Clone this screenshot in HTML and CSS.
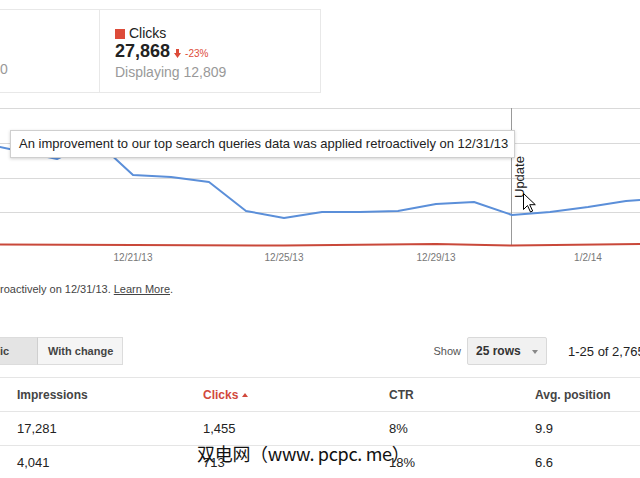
FILE: index.html
```html
<!DOCTYPE html>
<html>
<head>
<meta charset="utf-8">
<link rel="stylesheet" href="styles.css">
</head>
<body>
<div class="page">
  <div class="summary">
    <div class="card card-first">
      <div class="card-sub">0</div>
    </div>
    <div class="card card-clicks">
      <div class="card-title"><span class="swatch"></span>Clicks</div>
      <div class="card-value">27,868 <span class="delta"><svg class="delta-arrow" width="7" height="9" viewBox="0 0 7 9"><path d="M2 0h3v4h2L3.5 9 0 4h2z" fill="#dd4b39"/></svg>-23%</span></div>
      <div class="card-sub">Displaying 12,809</div>
    </div>
  </div>

  <div class="chart">
    <svg class="chart-svg" width="640" height="177" viewBox="0 0 640 177">
      <g stroke="#d9d9d9" stroke-width="1">
        <line x1="0" y1="15.5" x2="640" y2="15.5"/>
        <line x1="0" y1="50.5" x2="640" y2="50.5"/>
        <line x1="0" y1="85.5" x2="640" y2="85.5"/>
        <line x1="0" y1="119.5" x2="640" y2="119.5"/>
      </g>
      <line x1="511.5" y1="15" x2="511.5" y2="152" stroke="#999" stroke-width="1"/>
      <polyline fill="none" stroke="#c9483a" stroke-width="2" points="0,151.5 133,152 284,152.5 436,151 512,152.5 640,151"/>
      <polyline fill="none" stroke="#5b8fd9" stroke-width="2" stroke-linejoin="round" points="-19,50 19,58 57,66 95,47 133,82 171,84 209,89 246,118 284,125 322,119 360,119 398,118 436,111 474,109 512,122 550,119 588,114 626,108 640,107"/>
      <g class="axis-label" text-anchor="middle">
        <text x="133" y="168">12/21/13</text>
        <text x="284" y="168">12/25/13</text>
        <text x="436" y="168">12/29/13</text>
        <text x="588" y="168">1/2/14</text>
      </g>
      <text class="update-label" transform="translate(524 105) rotate(-90)">Update</text>
      <path class="cursor" d="M523.5 100.5v16l4-4 3 6.5 2.2-1-3-6.3h5.6z" fill="#fff" stroke="#000" stroke-width="1" stroke-linejoin="miter"/>
    </svg>
    <div class="tooltip">An improvement to our top search queries data was applied retroactively on 12/31/13</div>
  </div>

  <p class="note">roactively on 12/31/13. <a class="note-link">Learn More</a>.</p>

  <div class="toolbar">
    <div class="seg">
      <span class="seg-btn seg-on">ic</span>
      <span class="seg-btn seg-off">With change</span>
    </div>
    <div class="toolbar-right">
      <span class="show">Show</span>
      <span class="select">25 rows<span class="caret"></span></span>
      <span class="range">1-25 of 2,765</span>
    </div>
  </div>

  <div class="table">
    <div class="row head">
      <div class="c c1">Impressions</div>
      <div class="c c2 sorted">Clicks <span class="sort-up"></span></div>
      <div class="c c3">CTR</div>
      <div class="c c4">Avg. position</div>
    </div>
    <div class="row">
      <div class="c c1">17,281</div>
      <div class="c c2">1,455</div>
      <div class="c c3">8%</div>
      <div class="c c4">9.9</div>
    </div>
    <div class="row">
      <div class="c c1">4,041</div>
      <div class="c c2">713</div>
      <div class="c c3">18%</div>
      <div class="c c4">6.6</div>
    </div>
    <div class="watermark">双电网（www. pcpc. me）</div>
  </div>
</div>
</body>
</html>
```

FILE: styles.css
```css
* { box-sizing: border-box; }
html, body { margin: 0; padding: 0; background: #fff; }
body {
  font-family: "Liberation Sans", Arial, sans-serif;
  color: #222;
  width: 640px;
  height: 478px;
  overflow: hidden;
}
.page { width: 640px; }

.summary {
  margin-top: 9px;
  display: flex;
  width: 321px;
  height: 84px;
  border-top: 1px solid #e8e8e8;
  border-bottom: 1px solid #e8e8e8;
}
.card { border-right: 1px solid #e8e8e8; height: 100%; }
.card-first { width: 100px; padding-top: 51px; }
.card-clicks { width: 221px; padding: 15px 0 0 15px; }
.card-title { font-size: 14px; line-height: 16px; display: flex; align-items: center; color: #222; }
.swatch { width: 10px; height: 10px; background: #dd4b39; margin-right: 4px; margin-top: 1px; }
.card-value { font-size: 18px; font-weight: bold; line-height: 20px; color: #222; }
.delta { font-size: 10px; font-weight: normal; color: #dd4b39; }
.delta-arrow { vertical-align: -1px; margin-right: 4px; margin-left: -1px; }
.card-sub { font-size: 14px; line-height: 16px; color: #999; }

.chart { position: relative; height: 177px; }
.chart-svg { display: block; }
.axis-label { font-size: 10px; fill: #777; font-family: "Liberation Sans", Arial, sans-serif; }
.update-label { font-size: 13px; fill: #222; font-family: "Liberation Sans", Arial, sans-serif; }
.tooltip {
  position: absolute;
  left: 10px;
  top: 37px;
  width: 505px;
  height: 28px;
  padding: 0 0 0 8px;
  background: #fff;
  border: 1px solid #cfcfcf;
  box-shadow: 0 1px 3px rgba(0,0,0,0.18);
  font-size: 13px;
  line-height: 26px;
  color: #222;
  white-space: nowrap;
}

.note { margin: 12px 0 0; font-size: 11px; line-height: 14px; color: #444; }
.note-link { color: #444; text-decoration: underline; }

.toolbar {
  margin-top: 41px;
  height: 28px;
  display: flex;
  justify-content: space-between;
  align-items: center;
}
.seg { display: flex; height: 28px; }
.seg-btn {
  display: flex;
  align-items: center;
  height: 28px;
  font-size: 11px;
  font-weight: bold;
  color: #444;
  white-space: nowrap;
  border-top: 1px solid #dcdcdc;
  border-bottom: 1px solid #dcdcdc;
}
.seg-on {
  width: 38px;
  background: #e4e4e4;
  border-right: 1px solid #cfcfcf;
}
.seg-off {
  width: 85px;
  padding-left: 10px;
  background: #f5f5f5;
  border-right: 1px solid #dcdcdc;
}
.toolbar-right { display: flex; align-items: center; height: 28px; }
.show { font-size: 11px; color: #555; margin-right: 6px; }
.select {
  position: relative;
  display: flex;
  align-items: center;
  width: 80px;
  height: 28px;
  padding-left: 8px;
  background: #f1f1f1;
  border: 1px solid #d9d9d9;
  border-radius: 2px;
  font-size: 12px;
  font-weight: bold;
  color: #333;
}
.caret {
  position: absolute;
  right: 8px;
  top: 12px;
  width: 0; height: 0;
  border-left: 3.5px solid transparent;
  border-right: 3.5px solid transparent;
  border-top: 4px solid #888;
}
.range { font-size: 13px; color: #222; margin-left: 21px; width: 72px; white-space: nowrap; overflow: hidden; }

.table { position: relative; margin-top: 12px; border-top: 1px solid #e5e5e5; }
.row { display: flex; height: 34px; align-items: center; border-bottom: 1px solid #e5e5e5; font-size: 13px; color: #222; }
.row.head { font-size: 12px; font-weight: bold; color: #444; }
.c { white-space: nowrap; }
.c1 { width: 203px; padding-left: 17px; }
.c2 { width: 186px; }
.c3 { width: 146px; }
.c4 { flex: 1; }
.sorted { color: #d1483c; }
.sort-up {
  display: inline-block;
  width: 0; height: 0;
  border-left: 3.5px solid transparent;
  border-right: 3.5px solid transparent;
  border-bottom: 4px solid #d1483c;
  vertical-align: 2px;
}
.watermark {
  position: absolute;
  left: 197px;
  top: 63px;
  font-family: "Noto Sans CJK SC", sans-serif;
  font-size: 18px;
  line-height: 24px;
  letter-spacing: -0.3px;
  color: #111;
  white-space: nowrap;
}
```
